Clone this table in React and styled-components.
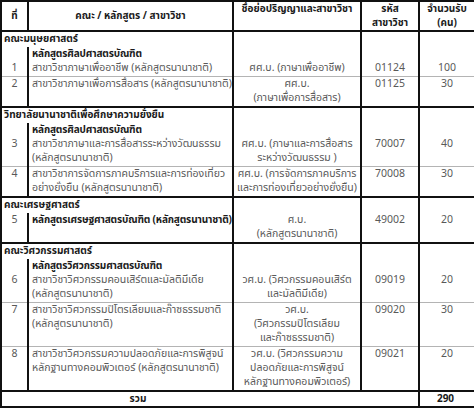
import React from "react";
import styled, { createGlobalStyle } from "styled-components";

const GlobalStyle = createGlobalStyle`
  html, body {
    margin: 0;
    padding: 0;
    background: #ffffff;
  }
  body {
    font-family: Tahoma, "Noto Sans Thai", "Noto Sans", "DejaVu Sans", sans-serif;
  }
`;

const groups = [
  {
    faculty: "คณะมนุษยศาสตร์",
    program: "หลักสูตรศิลปศาสตรบัณฑิต",
    items: [
      {
        no: 1,
        name: ["สาขาวิชาภาษาเพื่ออาชีพ (หลักสูตรนานาชาติ)"],
        degree: ["ศศ.บ. (ภาษาเพื่ออาชีพ)"],
        code: "01124",
        count: 100,
      },
      {
        no: 2,
        name: ["สาขาวิชาภาษาเพื่อการสื่อสาร (หลักสูตรนานาชาติ)"],
        degree: ["ศศ.บ.", "(ภาษาเพื่อการสื่อสาร)"],
        code: "01125",
        count: 30,
      },
    ],
  },
  {
    faculty: "วิทยาลัยนานาชาติเพื่อศึกษาความยั่งยืน",
    program: "หลักสูตรศิลปศาสตรบัณฑิต",
    items: [
      {
        no: 3,
        name: ["สาขาวิชาภาษาและการสื่อสารระหว่างวัฒนธรรม", "(หลักสูตรนานาชาติ)"],
        degree: ["ศศ.บ. (ภาษาและการสื่อสาร", "ระหว่างวัฒนธรรม )"],
        code: "70007",
        count: 40,
      },
      {
        no: 4,
        name: ["สาขาวิชาการจัดการภาคบริการและการท่องเที่ยว", "อย่างยั่งยืน (หลักสูตรนานาชาติ)"],
        degree: ["ศศ.บ. (การจัดการภาคบริการ", "และการท่องเที่ยวอย่างยั่งยืน)"],
        code: "70008",
        count: 30,
      },
    ],
  },
  {
    faculty: "คณะเศรษฐศาสตร์",
    items: [
      {
        no: 5,
        bold: true,
        name: ["หลักสูตรเศรษฐศาสตรบัณฑิต (หลักสูตรนานาชาติ)"],
        degree: ["ศ.บ.", "(หลักสูตรนานาชาติ)"],
        code: "49002",
        count: 20,
      },
    ],
  },
  {
    faculty: "คณะวิศวกรรมศาสตร์",
    program: "หลักสูตรวิศวกรรมศาสตรบัณฑิต",
    items: [
      {
        no: 6,
        name: ["สาขาวิชาวิศวกรรมคอนเสิร์ตและมัลติมีเดีย", "(หลักสูตรนานาชาติ)"],
        degree: ["วศ.บ. (วิศวกรรมคอนเสิร์ต", "และมัลติมีเดีย)"],
        code: "09019",
        count: 20,
      },
      {
        no: 7,
        name: ["สาขาวิชาวิศวกรรมปิโตรเลียมและก๊าซธรรมชาติ", "(หลักสูตรนานาชาติ)"],
        degree: ["วศ.บ.", "(วิศวกรรมปิโตรเลียม", "และก๊าซธรรมชาติ)"],
        code: "09020",
        count: 30,
      },
      {
        no: 8,
        name: ["สาขาวิชาวิศวกรรมความปลอดภัยและการพิสูจน์", "หลักฐานทางคอมพิวเตอร์ (หลักสูตรนานาชาติ)"],
        degree: ["วศ.บ. (วิศวกรรมความ", "ปลอดภัยและการพิสูจน์", "หลักฐานทางคอมพิวเตอร์)"],
        code: "09021",
        count: 20,
      },
    ],
  },
];

const Lines = ({ lines }) =>
  lines.map((l, i) => (
    <React.Fragment key={i}>
      {i > 0 && <br />}
      {l}
    </React.Fragment>
  ));

const App = () => {
  return (
    <>
      <GlobalStyle />
      <Table>
        <colgroup>
          <col style={{ width: 27 }} />
          <col style={{ width: 205 }} />
          <col style={{ width: 128 }} />
          <col style={{ width: 58 }} />
          <col style={{ width: 56 }} />
        </colgroup>
        <thead>
          <tr>
            <HeadCell>ที่</HeadCell>
            <HeadCell>คณะ / หลักสูตร / สาขาวิชา</HeadCell>
            <HeadCell $top>ชื่อย่อปริญญาและสาขาวิชา</HeadCell>
            <HeadCell $top>
              รหัส
              <br />
              สาขาวิชา
            </HeadCell>
            <HeadCell $top>
              จำนวนรับ
              <br />
              (คน)
            </HeadCell>
          </tr>
        </thead>
        <tbody>
          {groups.map((g) => (
            <React.Fragment key={g.faculty}>
              <tr>
                <FacultyCell colSpan={2} $pad>
                  {g.faculty}
                </FacultyCell>
                <Cell $edge="none" />
                <Cell $edge="none" />
                <Cell $edge="none" />
              </tr>
              {g.program && (
                <tr>
                  <Cell $edge="none" />
                  <ProgramCell>{g.program}</ProgramCell>
                  <Cell $edge="none" />
                  <Cell $edge="none" />
                  <Cell $edge="none" />
                </tr>
              )}
              {g.items.map((it, idx) => {
                const edge = idx === g.items.length - 1 ? "thick" : "thin";
                return (
                  <tr key={it.no}>
                    <Cell $edge={edge} $center $pad>
                      {it.no}
                    </Cell>
                    {it.bold ? (
                      <ProgramCell $edge={edge} $pad>
                        <Lines lines={it.name} />
                      </ProgramCell>
                    ) : (
                      <Cell $edge={edge} $pad>
                        <Lines lines={it.name} />
                      </Cell>
                    )}
                    <Cell $edge={edge} $center $pad>
                      <Lines lines={it.degree} />
                    </Cell>
                    <Cell $edge={edge} $center $pad>
                      {it.code}
                    </Cell>
                    <Cell $edge={edge} $center $pad>
                      {it.count}
                    </Cell>
                  </tr>
                );
              })}
            </React.Fragment>
          ))}
          <tr>
            <TotalCell colSpan={4}>รวม</TotalCell>
            <TotalCell $sum>290</TotalCell>
          </tr>
        </tbody>
      </Table>
    </>
  );
};

const Table = styled.table`
  width: 474px;
  table-layout: fixed;
  border-collapse: collapse;
  border: 2px solid #111;
  font-size: 10.5px;
  line-height: 14px;
  color: #595959;
`;

const HeadCell = styled.th`
  border: 2px solid #111;
  padding: 0 2px;
  height: 28px;
  font-size: 10px;
  font-weight: bold;
  color: #1a1a1a;
  text-align: center;
  vertical-align: ${({ $top }) => ($top ? "top" : "middle")};
`;

const edges = {
  none: "none",
  thin: "1.5px solid #b4b4b4",
  thick: "2px solid #111",
};

const Cell = styled.td`
  border-left: 2px solid #111;
  border-right: 2px solid #111;
  border-top: none;
  border-bottom: ${({ $edge }) => edges[$edge] || "none"};
  padding: 0 3px ${({ $pad }) => ($pad ? "1px" : "0")};
  height: 14px;
  vertical-align: top;
  text-align: ${({ $center }) => ($center ? "center" : "left")};
  white-space: nowrap;
  overflow: hidden;
`;

const FacultyCell = styled(Cell)`
  font-size: 10px;
  font-weight: bold;
  color: #1a1a1a;
  padding-left: 2px;
`;

const ProgramCell = styled(Cell)`
  font-size: 10px;
  font-weight: bold;
  letter-spacing: -0.15px;
  color: #1a1a1a;
`;

const TotalCell = styled.td`
  border: 2px solid #111;
  height: 14px;
  padding: 0 ${({ $sum }) => ($sum ? "3px" : "144px")} 0 0;
  font-size: 10px;
  font-weight: bold;
  color: #1a1a1a;
  text-align: center;
`;

export default App;
